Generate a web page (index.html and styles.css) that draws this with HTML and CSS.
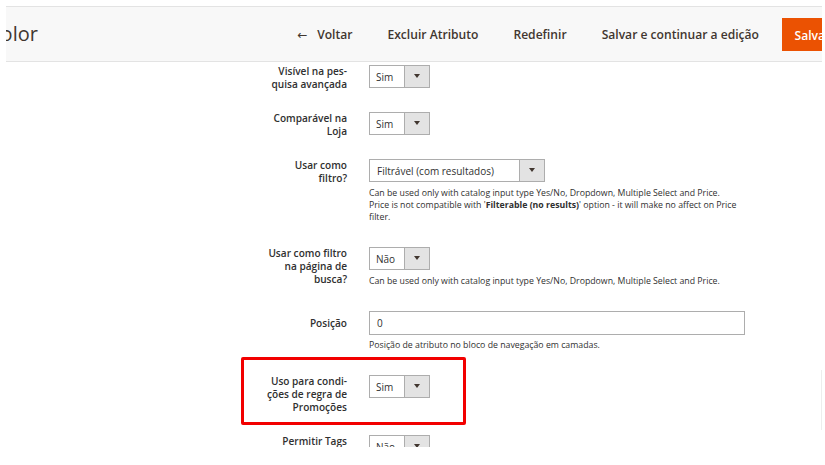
FILE: index.html
```html
<!DOCTYPE html>
<html lang="pt">
<head>
<meta charset="utf-8">
<title>Color</title>
<link rel="stylesheet" href="styles.css">
</head>
<body>
<div class="viewport">
  <header class="page-header">
    <div class="title-wrap"><h1 class="page-title">Color</h1></div>
    <div class="actions">
      <button class="action back"><span class="arrow-left">&larr;</span>Voltar</button>
      <button class="action">Excluir Atributo</button>
      <button class="action">Redefinir</button>
      <button class="action">Salvar e continuar a edição</button>
      <button class="action primary">Salvar Atributo</button>
    </div>
  </header>

  <div class="form">
    <div class="field">
      <label class="label">Visível na pes-<br>quisa avançada</label>
      <div class="control">
        <div class="select small"><span class="val">Sim</span><span class="caret"></span></div>
      </div>
    </div>

    <div class="field">
      <label class="label">Comparável na<br>Loja</label>
      <div class="control">
        <div class="select small"><span class="val">Sim</span><span class="caret"></span></div>
      </div>
    </div>

    <div class="field">
      <label class="label">Usar como<br>filtro?</label>
      <div class="control">
        <div class="select wide"><span class="val">Filtrável (com resultados)</span><span class="caret"></span></div>
        <div class="note">Can be used only with catalog input type Yes/No, Dropdown, Multiple Select and Price.<br>Price is not compatible with '<strong>Filterable (no results)</strong>' option - it will make no affect on Price<br>filter.</div>
      </div>
    </div>

    <div class="field">
      <label class="label">Usar como filtro<br>na página de<br>busca?</label>
      <div class="control">
        <div class="select small"><span class="val">Não</span><span class="caret"></span></div>
        <div class="note">Can be used only with catalog input type Yes/No, Dropdown, Multiple Select and Price.</div>
      </div>
    </div>

    <div class="field">
      <label class="label single">Posição</label>
      <div class="control">
        <input class="input-text" type="text" value="0">
        <div class="note tight">Posição de atributo no bloco de navegação em camadas.</div>
      </div>
    </div>

    <div class="field highlighted">
      <label class="label">Uso para condi-<br>ções de regra de<br>Promoções</label>
      <div class="control">
        <div class="select small"><span class="val">Sim</span><span class="caret"></span></div>
      </div>
    </div>

    <div class="field">
      <label class="label">Permitir Tags</label>
      <div class="control">
        <div class="select small"><span class="val">Não</span><span class="caret"></span></div>
      </div>
    </div>
  </div>
  <div class="scroll-hint"></div>
</div>
</body>
</html>
```

FILE: styles.css
```css
html, body {
  margin: 0;
  padding: 0;
  background: #ffffff;
}

body {
  font-family: "Open Sans", "DejaVu Sans", sans-serif;
  color: #303030;
}

.viewport {
  position: relative;
  margin: 6px 0 0 6px;
  width: 816px;
  height: 441px;
  overflow: hidden;
}

.page-header {
  display: flex;
  align-items: center;
  height: 54px;
  background: #f8f8f8;
  border-top: 1px solid #e3e3e3;
  border-bottom: 1px solid #e3e3e3;
}

.title-wrap {
  flex: 0 0 274px;
  overflow: hidden;
}

.page-title {
  margin: 0 0 0 -18px;
  font-size: 20px;
  font-weight: 400;
  color: #41362f;
  line-height: 28px;
}

.actions {
  display: flex;
  align-items: center;
  flex: 0 0 auto;
  white-space: nowrap;
}

.action {
  font-family: "Open Sans", "DejaVu Sans", sans-serif;
  font-size: 12.1px;
  font-weight: 600;
  color: #41362f;
  background: transparent;
  border: 0;
  padding: 0 17.5px;
  height: 33px;
  line-height: 33px;
}

.action.back {
  padding-left: 17px;
}

.arrow-left {
  display: inline-block;
  margin-right: 10px;
  font-weight: 400;
}

.action.primary {
  margin-left: 5px;
  padding: 0 12px;
  background: #eb5202;
  border: 1px solid #eb5202;
  color: #ffffff;
}

.form {
  display: flex;
  flex-direction: column;
  margin-top: 3px;
}

.field {
  display: grid;
  grid-template-columns: 341px auto;
  column-gap: 22px;
  align-items: start;
  margin-bottom: 21px;
}

.label {
  text-align: right;
  font-size: 10.1px;
  font-weight: 600;
  line-height: 13px;
  color: #303030;
}

.label.single {
  line-height: 24px;
}

.control {
  display: flex;
  flex-direction: column;
  align-items: flex-start;
}

.select {
  display: flex;
  height: 23px;
  box-sizing: border-box;
  border: 1px solid #adadad;
  background: #ffffff;
  font-size: 10px;
  color: #303030;
}

.select .val {
  display: flex;
  align-items: center;
  padding-left: 6px;
  box-sizing: border-box;
}

.select.small .val {
  width: 34px;
}

.select.wide .val {
  width: 149px;
  padding-left: 7px;
}

.select .caret {
  position: relative;
  width: 24px;
  background: #e3e3e3;
  border-left: 1px solid #adadad;
  display: flex;
  align-items: center;
  justify-content: center;
}

.select .caret::before {
  content: "";
  display: block;
  width: 0;
  height: 0;
  margin-top: -2px;
  border-left: 3px solid transparent;
  border-right: 3px solid transparent;
  border-top: 4px solid #41362f;
}

.input-text {
  box-sizing: border-box;
  width: 376px;
  height: 24px;
  margin: 0;
  padding: 0 7px;
  border: 1px solid #adadad;
  font-family: "Open Sans", "DejaVu Sans", sans-serif;
  font-size: 10px;
  color: #303030;
}

.note {
  margin-top: 5px;
  padding-bottom: 3px;
  font-size: 8.75px;
  line-height: 12px;
  color: #303030;
}

.note.tight {
  margin-top: 4px;
}

.note strong {
  font-weight: 700;
}

.highlighted {
  position: relative;
}

.highlighted::after {
  content: "";
  position: absolute;
  left: 235px;
  top: -18px;
  width: 225px;
  height: 68px;
  box-sizing: border-box;
  border: 3px solid #f20000;
  border-radius: 2px;
  pointer-events: none;
}

.scroll-hint {
  position: absolute;
  right: 0;
  top: 364px;
  width: 1px;
  height: 60px;
  background: #ededed;
}
```
